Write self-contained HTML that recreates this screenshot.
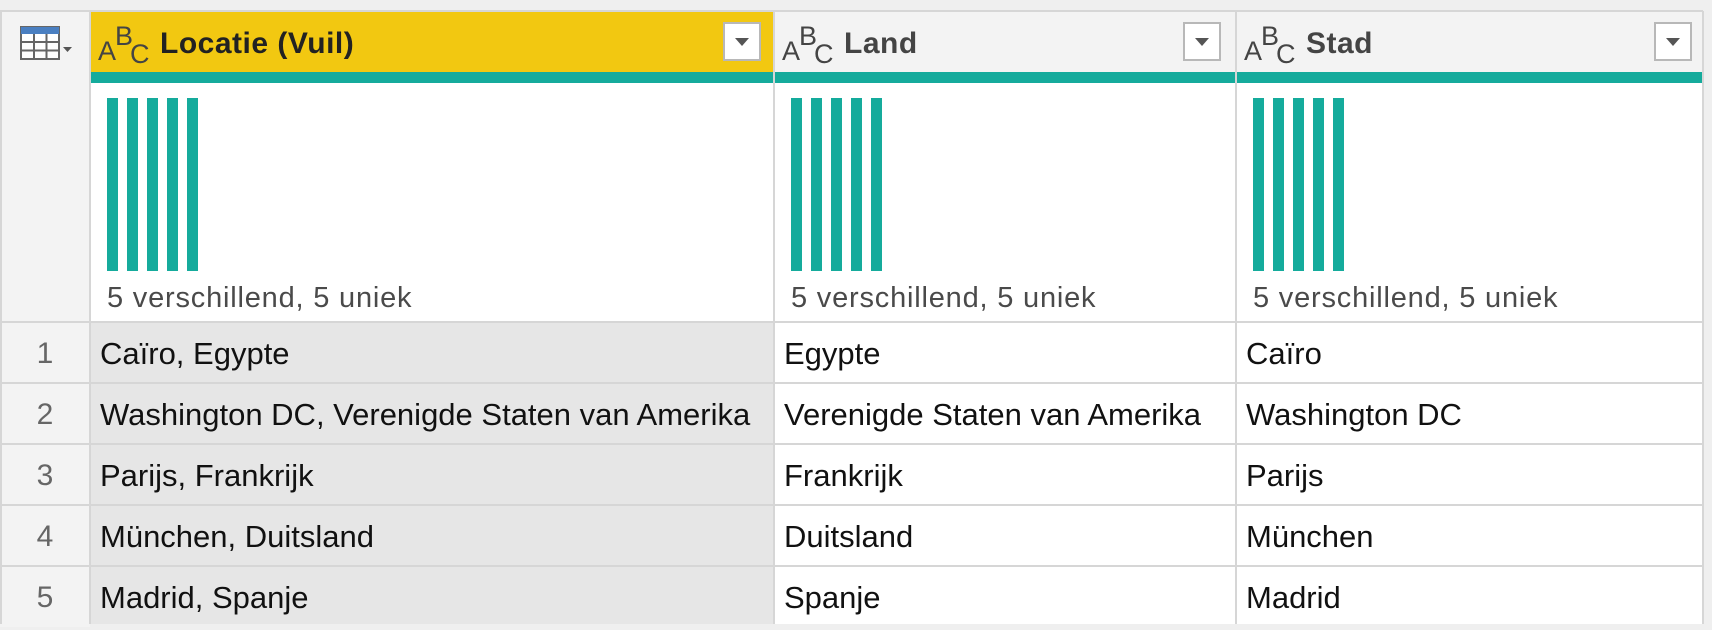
<!DOCTYPE html>
<html><head><meta charset="utf-8"><style>
*{margin:0;padding:0;box-sizing:border-box}
body{width:1712px;height:624px;background:#efefef;position:relative;overflow:hidden;font-family:"Liberation Sans",sans-serif}
.a{position:absolute}
.hdr{top:11px;height:61px;background:#f3f3f3}
.teal{top:72px;height:11px;background:#15ab9c}
.prof{top:83px;height:239px;background:#fff}
.bar{position:absolute;top:15px;width:11px;height:173px;background:#15ab9c}
.stat{position:absolute;left:17px;top:199px;font-size:29px;color:#4a4a4a;letter-spacing:0.8px}
.cell{height:61px;font-size:31px;color:#111;line-height:64px;padding-left:10px;white-space:nowrap;letter-spacing:0}
.num{font-size:30px;color:#666;text-align:center;line-height:64px;height:61px;background:#f3f3f3}
.vl{background:#d6d6d6;width:2px;top:11px;height:613px}
.hl{background:#d6d6d6;height:2px;left:0;width:1703px}
.title{position:absolute;top:16px;font-size:30px;font-weight:bold;color:#222;letter-spacing:0.5px}
.abc{position:absolute;top:8px;width:56px;height:50px;color:#444;font-size:27px}
.abc span{position:absolute}
.dd{position:absolute;top:11px;width:38px;height:39px;background:#fff;border:2px solid #b8b8b8}
.dd:after{content:"";position:absolute;left:10px;top:14px;border-left:7px solid transparent;border-right:7px solid transparent;border-top:8px solid #555}
</style></head><body>
<div class="a hdr" style="left:0;width:90px"></div>
<div class="a hdr" style="left:90px;width:684px;background:#f2c811"></div>
<div class="a hdr" style="left:774px;width:462px"></div>
<div class="a hdr" style="left:1236px;width:467px"></div>
<svg class="a" style="left:20px;top:26px" width="60" height="36" viewBox="0 0 60 36">
<rect x="1" y="1" width="38" height="32" fill="#fff" stroke="#666" stroke-width="2"/>
<rect x="1" y="1" width="38" height="7" fill="#4a7fc1"/>
<path d="M1 16H39M1 24.5H39M14 8V33M26.5 8V33" stroke="#666" stroke-width="2"/>
<path d="M43 21h9l-4.5 5z" fill="#555"/>
</svg>
<div class="a teal" style="left:90px;width:1613px"></div>
<div class="a" style="left:0;top:72px;width:90px;height:250px;background:#f3f3f3"></div>
<div class="a prof" style="left:90px;width:684px">
<div class="bar" style="left:17px"></div><div class="bar" style="left:37px"></div><div class="bar" style="left:57px"></div><div class="bar" style="left:77px"></div><div class="bar" style="left:97px"></div>
<div class="stat">5 verschillend, 5 uniek</div></div>
<div class="a prof" style="left:774px;width:462px">
<div class="bar" style="left:17px"></div><div class="bar" style="left:37px"></div><div class="bar" style="left:57px"></div><div class="bar" style="left:77px"></div><div class="bar" style="left:97px"></div>
<div class="stat">5 verschillend, 5 uniek</div></div>
<div class="a prof" style="left:1236px;width:467px">
<div class="bar" style="left:17px"></div><div class="bar" style="left:37px"></div><div class="bar" style="left:57px"></div><div class="bar" style="left:77px"></div><div class="bar" style="left:97px"></div>
<div class="stat">5 verschillend, 5 uniek</div></div>
<div class="a" style="left:90px;top:11px;width:684px;height:61px">
<div class="abc" style="left:8px"><span style="left:0;top:17px">A</span><span style="left:17px;top:2px">B</span><span style="left:32px;top:20px">C</span></div>
<div class="title" style="left:70px">Locatie (Vuil)</div><div class="dd" style="left:633px"></div></div>
<div class="a" style="left:774px;top:11px;width:462px;height:61px">
<div class="abc" style="left:8px"><span style="left:0;top:17px">A</span><span style="left:17px;top:2px">B</span><span style="left:32px;top:20px">C</span></div>
<div class="title" style="left:70px;color:#444">Land</div><div class="dd" style="left:409px"></div></div>
<div class="a" style="left:1236px;top:11px;width:467px;height:61px">
<div class="abc" style="left:8px"><span style="left:0;top:17px">A</span><span style="left:17px;top:2px">B</span><span style="left:32px;top:20px">C</span></div>
<div class="title" style="left:70px;color:#444">Stad</div><div class="dd" style="left:418px"></div></div>
<div class="a" style="left:0;top:322px;width:90px">
<div class="num">1</div><div class="num">2</div><div class="num">3</div><div class="num">4</div><div class="num">5</div></div>
<div class="a" style="left:90px;top:322px;width:684px;background:#e6e6e6;height:302px">
<div class="cell">Caïro, Egypte</div><div class="cell">Washington DC, Verenigde Staten van Amerika</div><div class="cell">Parijs, Frankrijk</div><div class="cell">München, Duitsland</div><div class="cell">Madrid, Spanje</div></div>
<div class="a" style="left:774px;top:322px;width:462px;background:#fff;height:302px">
<div class="cell">Egypte</div><div class="cell">Verenigde Staten van Amerika</div><div class="cell">Frankrijk</div><div class="cell">Duitsland</div><div class="cell">Spanje</div></div>
<div class="a" style="left:1236px;top:322px;width:467px;background:#fff;height:302px">
<div class="cell">Caïro</div><div class="cell">Washington DC</div><div class="cell">Parijs</div><div class="cell">München</div><div class="cell">Madrid</div></div>
<div class="a hl" style="top:10px"></div>
<div class="a hl" style="top:321px"></div>
<div class="a hl" style="top:382px"></div>
<div class="a hl" style="top:443px"></div>
<div class="a hl" style="top:504px"></div>
<div class="a hl" style="top:565px"></div>
<div class="a vl" style="left:0"></div>
<div class="a vl" style="left:89px"></div>
<div class="a vl" style="left:773px"></div>
<div class="a vl" style="left:1235px"></div>
<div class="a vl" style="left:1702px"></div>
</body></html>
